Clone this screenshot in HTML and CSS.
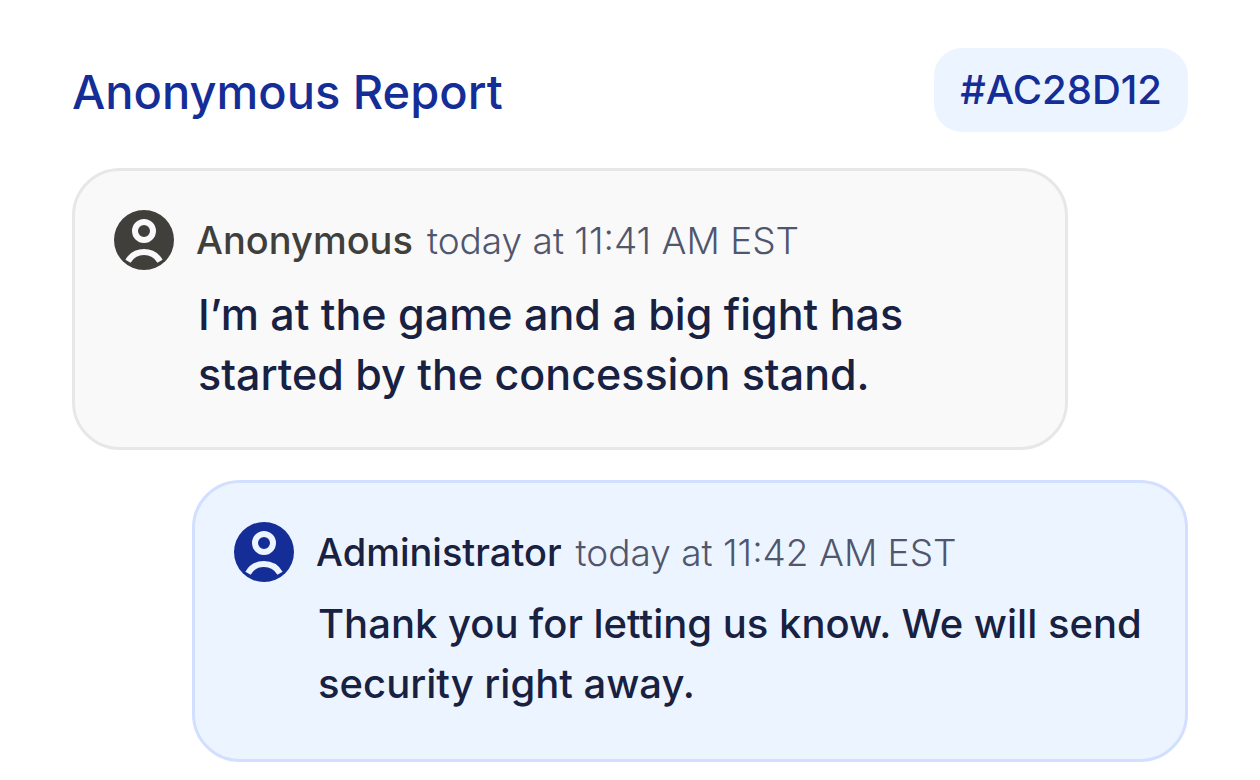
FILE: index.html
```html
<!DOCTYPE html>
<html lang="en">
<head>
<meta charset="utf-8">
<meta name="viewport" content="width=device-width, initial-scale=1">
<title>Anonymous Report</title>
<link rel="stylesheet" href="styles.css">
</head>
<body>
<main class="report">
  <header class="report-header">
    <h1 class="report-title">Anonymous Report</h1>
    <span class="report-id">#AC28D12</span>
  </header>
  <section class="thread">
    <article class="message message-anonymous">
      <svg class="avatar" viewBox="0 0 60 60" aria-hidden="true">
        <circle cx="30" cy="30" r="30" fill="currentColor"/>
        <circle class="avatar-line" cx="30" cy="21" r="9"/>
        <path class="avatar-line" d="M14 51.200A18.500 18.500 0 0 1 46 51.200"/>
      </svg>
      <div class="content">
        <div class="meta"><strong class="author">Anonymous</strong><time class="time">today at 11:41 AM EST</time></div>
        <p class="text text-large">I’m at the game and a big fight has started by the concession stand.</p>
      </div>
    </article>
    <article class="message message-admin">
      <svg class="avatar" viewBox="0 0 60 60" aria-hidden="true">
        <circle cx="30" cy="30" r="30" fill="currentColor"/>
        <circle class="avatar-line" cx="30" cy="21" r="9"/>
        <path class="avatar-line" d="M14 51.200A18.500 18.500 0 0 1 46 51.200"/>
      </svg>
      <div class="content">
        <div class="meta"><strong class="author">Administrator</strong><time class="time">today at 11:42 AM EST</time></div>
        <p class="text">Thank you for letting us know. We will send security right away.</p>
      </div>
    </article>
  </section>
</main>
</body>
</html>
```
FILE: styles.css
```css
* { box-sizing: border-box; }
body { margin: 0; background: #fff; font-family: Inter, "Liberation Sans", sans-serif; }
.report { padding: 48px 72px 18px; }
.report-header { display: flex; align-items: center; justify-content: space-between; }
.report-title { margin: 0; padding-top: 4px; color: #152e97; font-size: 47px; font-weight: 500; line-height: 60px; }
.report-id { padding: 12px 26px; border-radius: 28px; background: #ecf5ff; color: #152e97; font-size: 40px; font-weight: 500; line-height: 60px; }
.thread { display: flex; flex-direction: column; gap: 30px; margin-top: 36px; }
.message { display: flex; gap: 22px; width: calc(100% - 120px); padding: 39px 39px 43px; border: 3px solid; border-radius: 48px; }
.message-anonymous { border-color: #e7e7e8; background: #f9f9f9; }
.message-admin { align-self: flex-end; padding-bottom: 45px; border-color: #d2dfff; background: #ecf5ff; }
.avatar { flex: none; width: 60px; height: 60px; }
.avatar-line { fill: none; stroke: #f9f9f9; stroke-width: 6; }
.message-admin .avatar-line { stroke: #ecf5ff; }
.message-anonymous .avatar { color: #403f3b; }
.message-admin .avatar { color: #152e97; }
.content { flex: 1; min-width: 0; }
.meta { display: flex; align-items: baseline; gap: 14px; font-size: 38px; line-height: 60px; white-space: nowrap; }
.author { color: #182142; font-weight: 500; }
.message-anonymous .author { color: #403f3b; }
.time { color: #50566d; font-size: 37px; font-weight: 300; }
.text { margin: 11px 0 0; padding-left: 2px; color: #182142; font-size: 40px; font-weight: 500; line-height: 60px; }
.text-large { margin-top: 13px; font-size: 43px; }
```
